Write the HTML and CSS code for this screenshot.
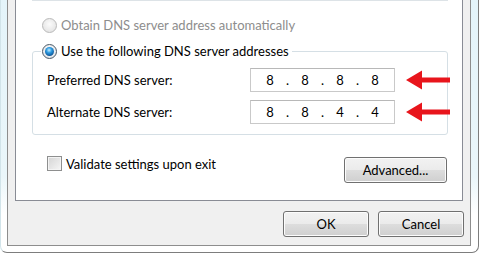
FILE: index.html
```html
<!DOCTYPE html>
<html lang="en">

<head>
    <meta charset="UTF-8">
    <meta name="viewport" content="width=device-width, initial-scale=1.0">
    <link rel="stylesheet" href="styles.css">
    <title>DNS settings</title>
</head>

<body>
    <div class="window">
        <div class="dialog">
            <div class="panel">
                <div class="prev-group"></div>
                <div class="radio-row disabled">
                    <span class="radio"></span>
                    <span>Obtain DNS server address automatically</span>
                </div>
                <fieldset class="group">
                    <legend class="radio-row">
                        <span class="radio checked"></span>
                        <span>Use the following DNS server addresses</span>
                    </legend>
                    <div class="row">
                        <span class="label">Preferred DNS server:</span>
                        <div class="ip">
                            <span class="num">8</span><span class="dot">.</span>
                            <span class="num">8</span><span class="dot">.</span>
                            <span class="num">8</span><span class="dot">.</span>
                            <span class="num">8</span>
                        </div>
                        <svg class="arrow" width="44" height="20" viewBox="0 0 44 20">
                            <polygon points="0,10 16,0.5 16,7.5 44,7.5 44,12.5 16,12.5 16,19.5" fill="#e8151c" />
                        </svg>
                    </div>
                    <div class="row">
                        <span class="label">Alternate DNS server:</span>
                        <div class="ip">
                            <span class="num">8</span><span class="dot">.</span>
                            <span class="num">8</span><span class="dot">.</span>
                            <span class="num">4</span><span class="dot">.</span>
                            <span class="num">4</span>
                        </div>
                        <svg class="arrow" width="44" height="20" viewBox="0 0 44 20">
                            <polygon points="0,10 16,0.5 16,7.5 44,7.5 44,12.5 16,12.5 16,19.5" fill="#e8151c" />
                        </svg>
                    </div>
                </fieldset>
                <div class="bottom-row">
                    <label class="check">
                        <span class="box"></span>
                        <span>Validate settings upon exit</span>
                    </label>
                    <button class="btn advanced">Advanced...</button>
                </div>
            </div>
            <div class="buttons">
                <button class="btn">OK</button>
                <button class="btn">Cancel</button>
            </div>
        </div>
    </div>
</body>

</html>
```

FILE: styles.css
```css
* {
    margin: 0;
    padding: 0;
    box-sizing: border-box;
}

body {
    width: 480px;
    height: 255px;
    overflow: hidden;
    background: #ffffff;
    font-family: Lato, "Noto Sans", sans-serif;
    font-size: 13px;
    color: #000000;
}

.window {
    width: 479px;
    height: 253px;
    padding: 0 7px 6px 6px;
    background: linear-gradient(to bottom, #e4f4fa 0%, #eaf6fa 70%, #ffffff 85%);
    border: 1px solid #7d7d7d;
    border-top: none;
    border-left-color: #d2e4ea;
    border-radius: 0 0 7px 7px;
}

.dialog {
    width: 464px;
    height: 246px;
    padding: 0 7px;
    background: #f0f0f0;
    border: 1px solid #8d8d8d;
    border-top: none;
}

.panel {
    height: 201px;
    background: #ffffff;
    border: 1px solid #898c95;
    border-top: none;
}

.prev-group {
    height: 1px;
    margin: 0 14px 0 16px;
    background: #dde3e7;
}

.radio-row {
    display: flex;
    align-items: center;
    height: 16px;
    gap: 4px;
}

.panel > .radio-row {
    margin: 16px 0 0 26px;
}

.disabled {
    color: #8d8d8d;
}

.radio {
    width: 15px;
    height: 15px;
    border-radius: 50%;
    border: 1px solid #b9b9b9;
    background: radial-gradient(circle at 50% 40%, #fbfbfb, #dedede);
    flex-shrink: 0;
}

.radio.checked {
    position: relative;
    border-color: #4a5866;
    background: radial-gradient(circle at 50% 40%, #ffffff, #d8dde2);
}

.radio.checked::after {
    content: "";
    position: absolute;
    left: 2px;
    top: 2px;
    width: 9px;
    height: 9px;
    border-radius: 50%;
    background: radial-gradient(circle at 45% 35%, #c4ecff 0%, #2c9ae0 35%, #0d5596 75%, #0a2f55 100%);
}

.group {
    margin: 10px 14px 0 16px;
    padding: 0 0 10px 14px;
    border: 1px solid #d5dfe5;
    border-radius: 3px;
}

.group legend {
    margin-left: -6px;
    padding: 0 3px 0 1px;
}

.row {
    display: flex;
    align-items: center;
    margin-top: 9px;
}

.row + .row {
    margin-top: 8px;
}

.label {
    flex: 1;
}

.ip {
    display: flex;
    align-items: center;
    width: 145px;
    height: 24px;
    padding-left: 6px;
    border: 1px solid #c9c9c9;
    border-top-color: #b8b8b8;
}

.num {
    width: 26px;
    text-align: center;
}

.dot {
    width: 9px;
    text-align: center;
}

.arrow {
    margin: 0 -3px 0 11px;
    display: block;
}

.bottom-row {
    display: flex;
    justify-content: space-between;
    align-items: flex-start;
    margin: 21px 15px 0 31px;
}

.check {
    display: flex;
    align-items: center;
    gap: 4px;
    height: 15px;
}

.box {
    width: 15px;
    height: 15px;
    border: 1px solid #8e8f8f;
    background: linear-gradient(135deg, #d4d4d4, #f6f6f6);
    box-shadow: inset 0 0 0 1px #f4f4f4;
}

.btn {
    font-family: Lato, "Noto Sans", sans-serif;
    font-size: 13px;
    color: #000000;
    height: 26px;
    border: 1px solid #707070;
    border-radius: 3px;
    background: linear-gradient(to bottom, #f2f2f2 0%, #ebebeb 50%, #dddddd 51%, #cfcfcf 100%);
    box-shadow: inset 0 0 0 1px #fcfcfc;
}

.advanced {
    width: 103px;
    margin-top: 1px;
}

.buttons {
    display: flex;
    justify-content: flex-end;
    gap: 9px;
    margin: 10px -1px 0 0;
}

.buttons .btn {
    width: 86px;
}
```
